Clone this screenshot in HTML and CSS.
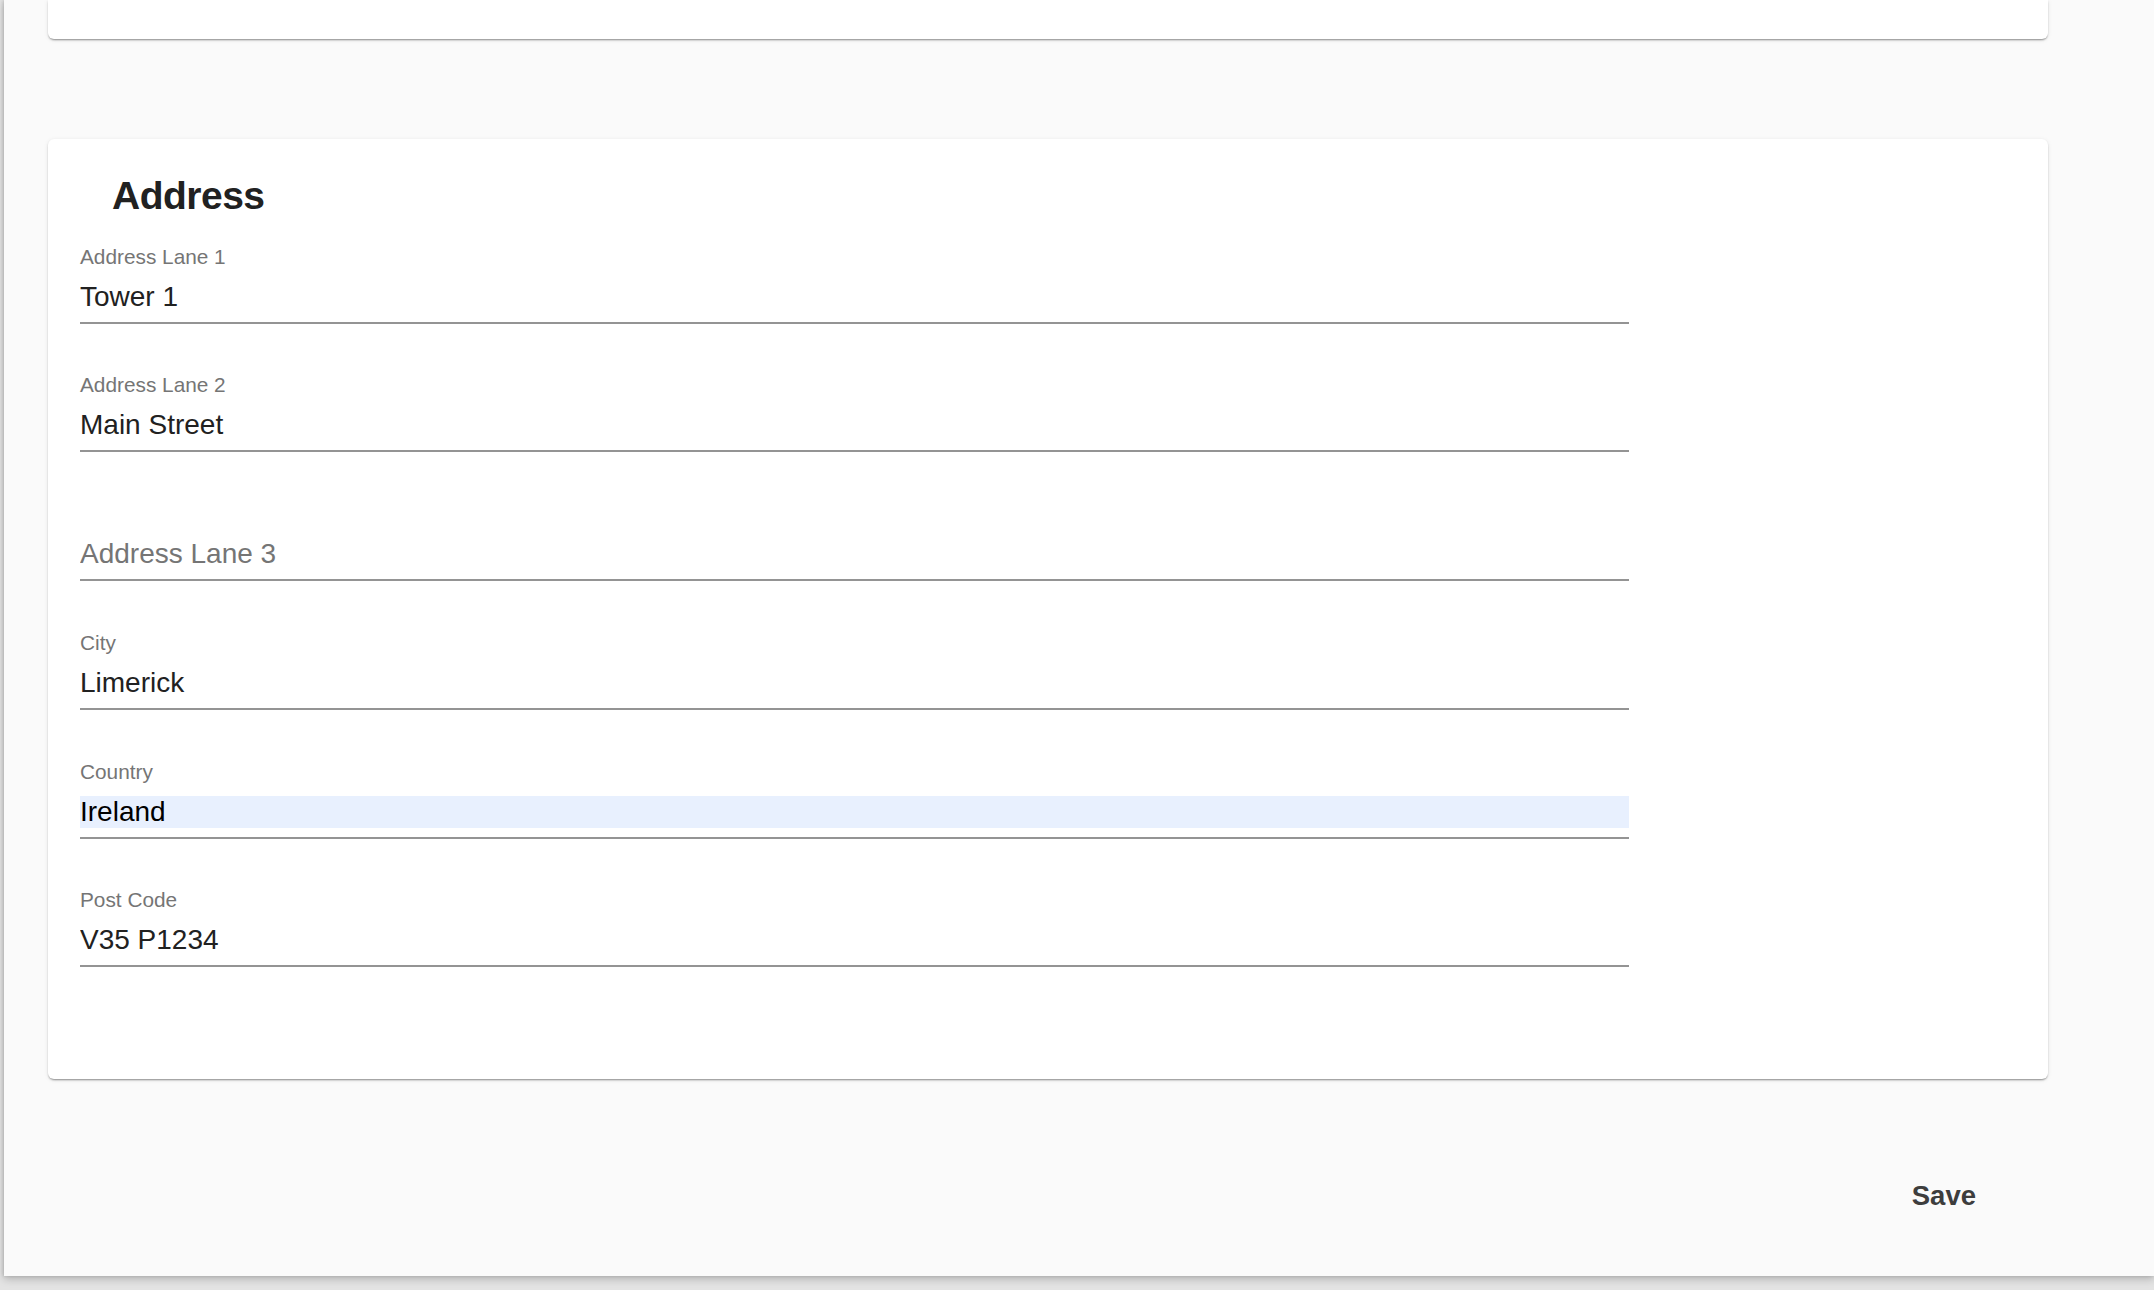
FILE: index.html
```html
<!DOCTYPE html>
<html lang="en">
<head>
<meta charset="utf-8">
<title>Address</title>
<link rel="stylesheet" href="styles.css">
</head>
<body>
<div class="panel">
  <div class="card card-top"></div>
  <section class="card">
    <h2 class="card-title">Address</h2>
    <div class="fields">
      <label class="field">
        <span class="field-label">Address Lane 1</span>
        <span class="field-control"><input class="field-input" type="text" value="Tower 1"></span>
      </label>
      <label class="field">
        <span class="field-label">Address Lane 2</span>
        <span class="field-control"><input class="field-input" type="text" value="Main Street"></span>
      </label>
      <label class="field">
        <span class="field-label field-label-hidden">Address Lane 3</span>
        <span class="field-control"><input class="field-input" type="text" placeholder="Address Lane 3"></span>
      </label>
      <label class="field">
        <span class="field-label">City</span>
        <span class="field-control"><input class="field-input" type="text" value="Limerick"></span>
      </label>
      <label class="field">
        <span class="field-label">Country</span>
        <span class="field-control"><input class="field-input field-input-autofill" type="text" value="Ireland"></span>
      </label>
      <label class="field">
        <span class="field-label">Post Code</span>
        <span class="field-control"><input class="field-input" type="text" value="V35 P1234"></span>
      </label>
    </div>
  </section>
  <div class="actions">
    <button class="save-button" type="button">Save</button>
  </div>
</div>
</body>
</html>
```
FILE: styles.css
```css
html, body {
  margin: 0;
  padding: 0;
}

body {
  background: #e3e3e3;
  height: 1290px;
  overflow: hidden;
  font-family: "Liberation Sans", Arial, Helvetica, sans-serif;
}

.panel {
  margin-left: 4px;
  height: 1276px;
  background: #fafafa;
  box-shadow: 0 3px 8px rgba(0, 0, 0, 0.22), -1px 0 3px rgba(0, 0, 0, 0.12);
  padding: 0 106px 0 44px;
  box-sizing: border-box;
  display: flex;
  flex-direction: column;
}

.card {
  background: #ffffff;
  border-radius: 6px;
  box-shadow: 0 2px 2px -1px rgba(0, 0, 0, 0.32), 0 1px 2px 0 rgba(0, 0, 0, 0.12), 0 1px 5px 0 rgba(0, 0, 0, 0.08);
}

.card-top {
  height: 39px;
  border-top-left-radius: 0;
  border-top-right-radius: 0;
  flex: none;
}

.card + .card {
  margin-top: 100px;
  padding: 33.5px 32px 112px;
}

.card-title {
  margin: 0 0 26px 32px;
  font-size: 39px;
  line-height: 46px;
  font-weight: 700;
  letter-spacing: -0.5px;
  color: #212121;
}

.fields {
  width: 80%;
  display: flex;
  flex-direction: column;
  gap: 49.8px;
}

.field {
  display: flex;
  flex-direction: column;
}

.field-label {
  font-size: 20.8px;
  line-height: 24px;
  height: 24px;
  color: #757575;
}

.field-label-hidden {
  visibility: hidden;
}

.field-control {
  display: block;
  padding: 12px 0 9px;
  border-bottom: 2px solid #949494;
}

.field-input {
  display: block;
  width: 100%;
  box-sizing: border-box;
  height: 32px;
  margin: 0;
  padding: 0;
  border: 0;
  outline: none;
  background: transparent;
  font-family: inherit;
  font-size: 28px;
  line-height: 32px;
  color: #212121;
}

.field-input::placeholder {
  color: #757575;
  opacity: 1;
}

.field-input-autofill {
  background: #e8f0fe;
  color: #000000;
}

.actions {
  margin-top: 99.5px;
  display: flex;
  justify-content: flex-end;
}

.save-button {
  margin: 0 72px 0 0;
  padding: 0;
  border: 0;
  background: transparent;
  font-family: inherit;
  font-size: 27.5px;
  line-height: 34px;
  font-weight: 700;
  color: #3d3d3d;
  cursor: pointer;
}
```
